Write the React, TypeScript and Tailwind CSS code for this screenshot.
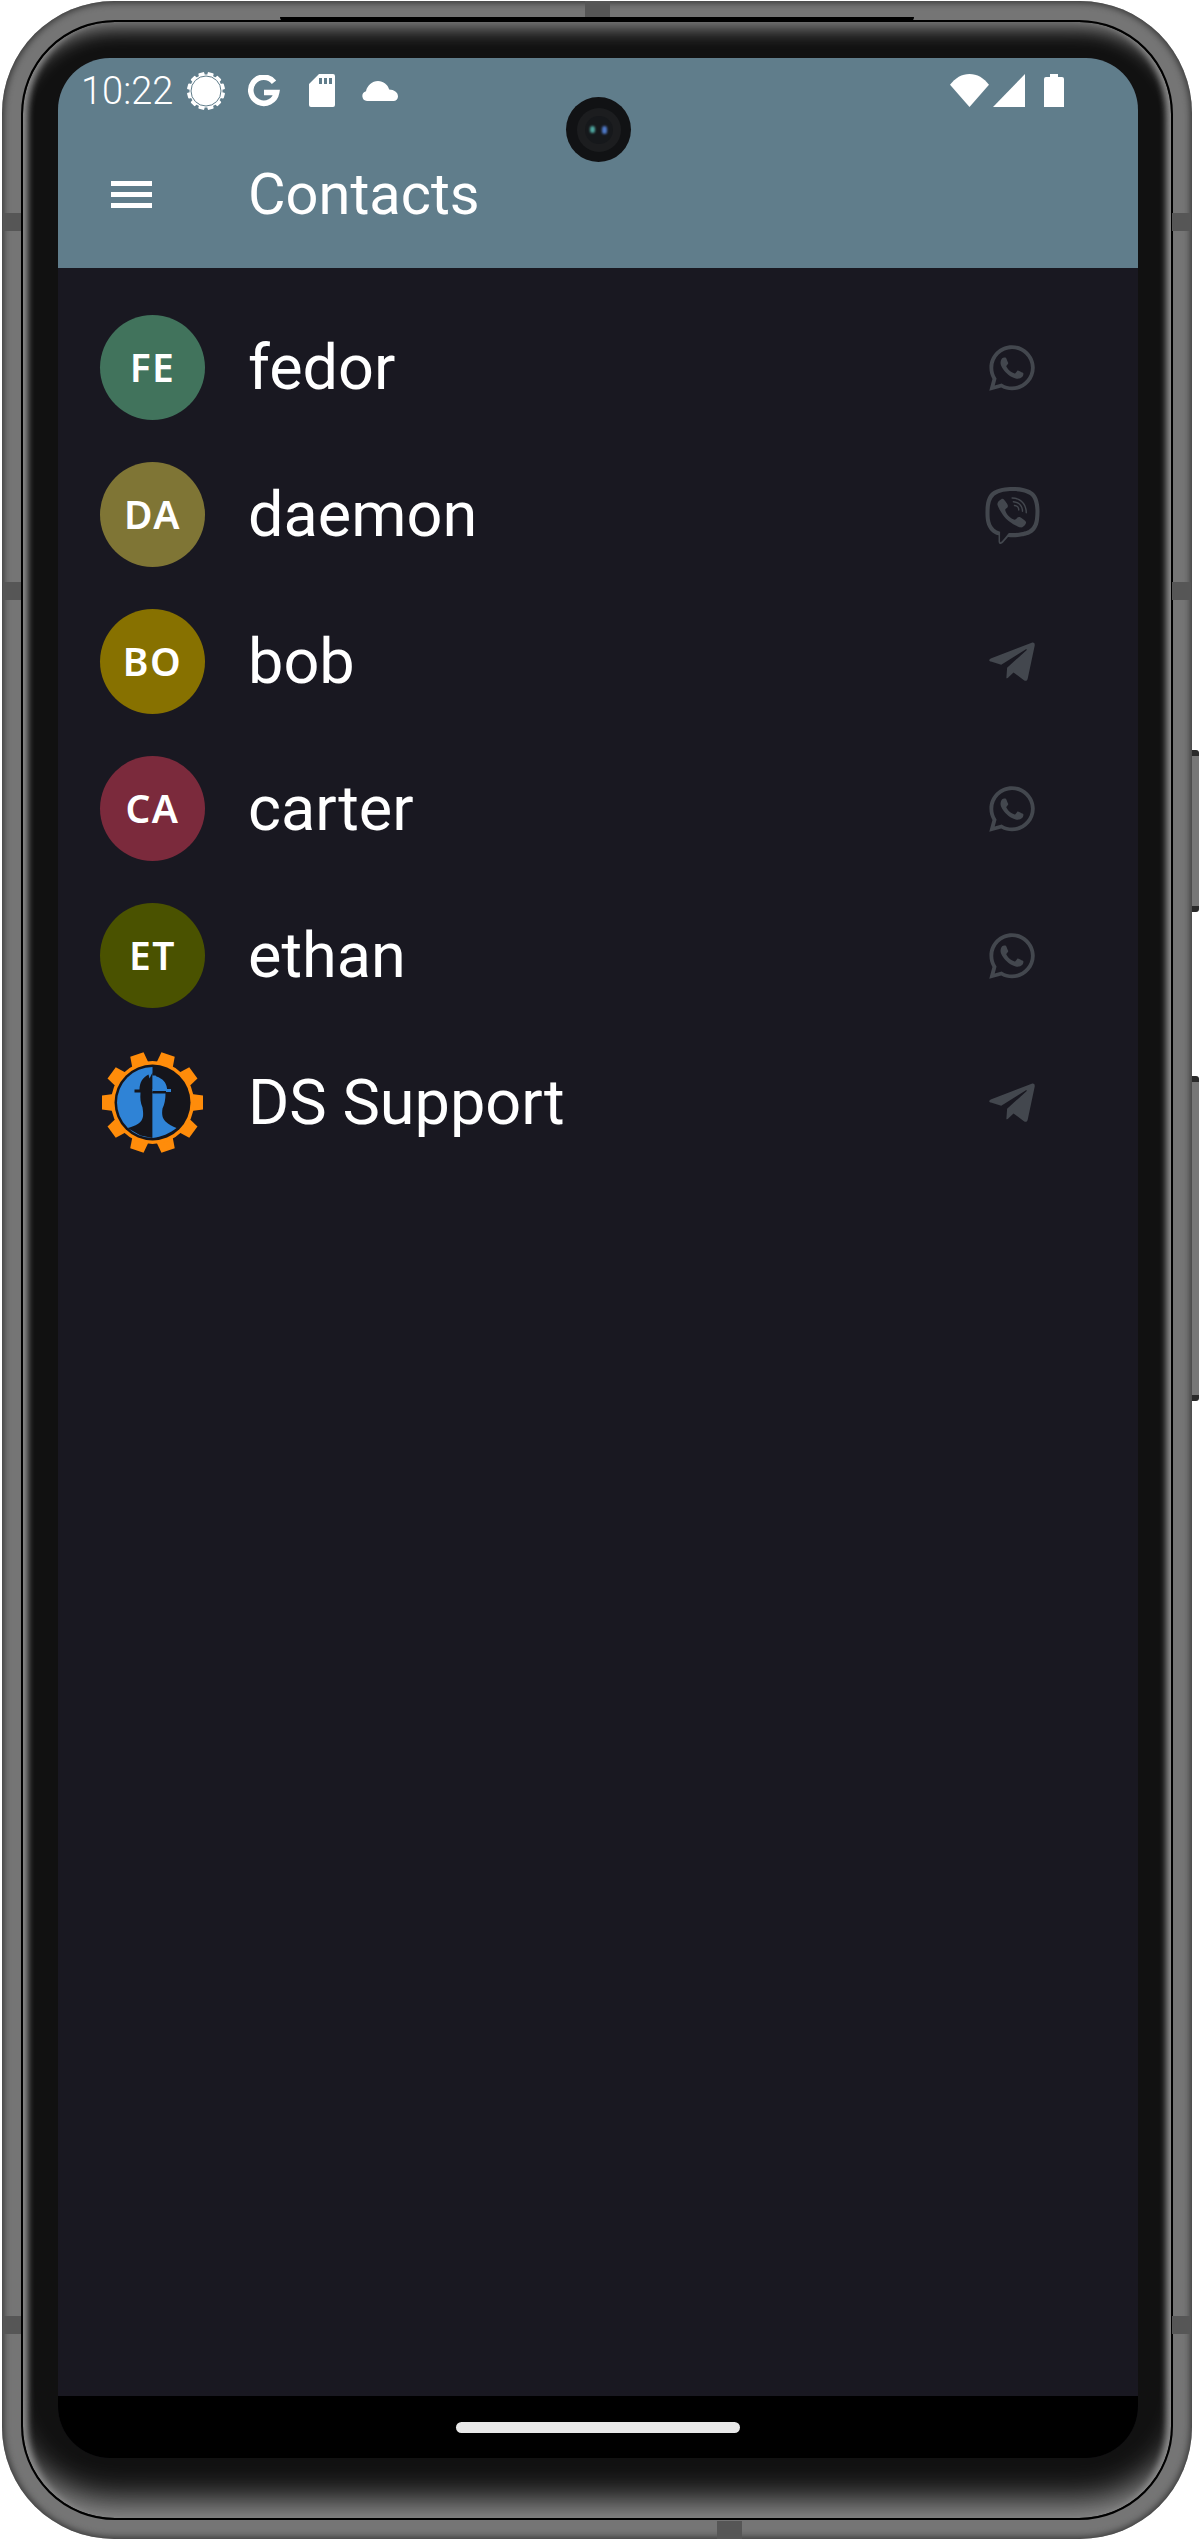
import React from "react";
import { FaWhatsapp, FaViber, FaTelegramPlane } from "react-icons/fa";

function SunGear() {
  const teeth = Array.from({ length: 12 }, (_, i) => i * 30 + 15);
  return (
    <svg width="38" height="38" viewBox="-19 -19 38 38" className="ml-[16px] shrink-0">
      {teeth.map((a) => (
        <rect key={a} x="-3" y="-19" width="6" height="6" rx="1" fill="#fff" transform={`rotate(${a})`} />
      ))}
      <circle r="16.5" fill="#fff" />
      <circle r="15" fill="none" stroke="#607d8b" strokeWidth="1" />
    </svg>
  );
}

function GoogleG() {
  return (
    <svg width="33" height="32" viewBox="0 0 33 32" className="ml-[22px] shrink-0">
      <path d="M27 7.2A13 13 0 1 0 29.6 17.5H17" fill="none" stroke="#fff" strokeWidth="5.6" />
    </svg>
  );
}

function SdCard() {
  return (
    <svg width="26" height="33" viewBox="0 0 26 33" className="ml-[29px] shrink-0">
      <path
        fillRule="evenodd"
        fill="#fff"
        d="M10 0H24A2 2 0 0 1 26 2V31A2 2 0 0 1 24 33H2A2 2 0 0 1 0 31V10ZM10 4V10H13V4ZM15 4V10H18V4ZM20 4V10H23V4Z"
      />
    </svg>
  );
}

function Cloud() {
  return (
    <svg width="36" height="20" viewBox="0 0 36 20" className="ml-[27px] shrink-0">
      <path
        fill="#fff"
        d="M5 20A5 5 0 0 1 4 10.2C5.2 4.4 10.2 0 16 0C21.4 0 25.8 3.6 27.2 8.4C32 8.6 36 11 36 15.5C36 18 34 20 31.5 20Z"
      />
    </svg>
  );
}

function Wifi() {
  return (
    <svg width="39" height="33" viewBox="0 0 39 33" className="shrink-0">
      <path fill="#fff" d="M19.5 33L0 10.8C5 4 12 0 19.5 0C27 0 34 4 39 10.8Z" />
    </svg>
  );
}

function Signal() {
  return (
    <svg width="32" height="33" viewBox="0 0 32 33" className="ml-[4px] shrink-0">
      <path fill="#fff" d="M32 0V33H0Z" />
    </svg>
  );
}

function Battery() {
  return (
    <svg width="20" height="33" viewBox="0 0 20 33" className="ml-[19px] shrink-0">
      <path fill="#fff" d="M6 0H14V3H18A2 2 0 0 1 20 5V33H0V5A2 2 0 0 1 2 3H6Z" />
    </svg>
  );
}

function DsLogo() {
  const teeth = Array.from({ length: 10 }, (_, i) => i * 36 + 90);
  return (
    <svg width="105" height="105" viewBox="-52.5 -52.5 105 105" className="shrink-0">
      {teeth.map((a) => (
        <path key={a} d="M-8.500 -39L-7 -50.500H7L8.500 -39Z" fill="#ff8c0a" transform={`rotate(${a})`} />
      ))}
      <circle r="41.500" fill="#ff8c0a" />
      <circle r="38" fill="#15151b" />
      <path d="M0 -35.500A35.500 35.500 0 0 0 0 35.500Z" fill="#2f83d6" />
      <path
        fill="#15151b"
        d="M0 -30L-3 -24L-4 -28C-10 -25 -13 -20 -13 -13H-18V-10H-12C-12.500 -4 -12 0 -10 5C-9 11 -9 15 -11 18C-14 22 -19 24 -25 25.500L-12 33L0 35.500Z"
      />
      <path
        fill="#2f83d6"
        d="M0 -12V-27H3L4 -26C10 -24 14 -20 14.500 -14V-12ZM0 -9H13C13 -3 12 2 10 6C9 12 10 16 13 19C16 22 20 24 24 25.500C17 31 9 34.500 0 35.500Z"
      />
      <path d="M0 -13.500H18.500V-10.500H0Z" fill="#2f83d6" />
      <path d="M0 -11.500H13.500V-9.500H0Z" fill="#15151b" />
    </svg>
  );
}

const contacts = [
  { name: "fedor", initials: "FE", bg: "bg-[#41735c]", app: "whatsapp" },
  { name: "daemon", initials: "DA", bg: "bg-[#7f7535]", app: "viber" },
  { name: "bob", initials: "BO", bg: "bg-[#877100]", app: "telegram" },
  { name: "carter", initials: "CA", bg: "bg-[#7b2a3c]", app: "whatsapp" },
  { name: "ethan", initials: "ET", bg: "bg-[#4a5200]", app: "whatsapp" },
  { name: "DS Support", initials: "", bg: "", app: "telegram" },
];

function AppIcon({ app }: { app: string }) {
  if (app === "whatsapp") return <FaWhatsapp size={52} color="#43474e" className="shrink-0" />;
  if (app === "viber") return <FaViber size={57} color="#43474e" className="shrink-0" />;
  return <FaTelegramPlane size={52} color="#43474e" className="shrink-0" />;
}

function Band({ className }: { className: string }) {
  return <div className={`absolute bg-[#565656] ${className}`} />;
}

export default function App() {
  return (
    <div className="relative w-[1200px] h-[2541px] bg-white pl-[2px] pt-[1px] font-['Roboto',sans-serif]">
      <div className="absolute left-[1192px] top-[750px] w-[7px] h-[162px] rounded-r-[3px] bg-[#777] border-y-[6px] border-y-[#2a2a2a]" />
      <div className="absolute left-[1192px] top-[1076px] w-[7px] h-[325px] rounded-r-[3px] bg-[#777] border-y-[6px] border-y-[#2a2a2a]" />
      <div className="w-[1190px] h-[2538px] rounded-[112px] bg-[#757575] p-[19px] shadow-[inset_0_0_6px_2px_#3a3a3a]">
        <div className="w-full h-full rounded-[94px] border-2 border-black bg-[#111111] pl-[35px] pt-[36px] shadow-[inset_0_22px_20px_-16px_#8e8e8e,inset_0_-42px_32px_-24px_#8e8e8e,inset_11px_0_6px_-6px_#8c8c8c,inset_-11px_0_6px_-6px_#8c8c8c]">
          <div className="w-[1080px] h-[2400px] rounded-[52px] overflow-hidden flex flex-col bg-[#191821]">
            <div className="bg-[#607d8b] shrink-0">
              <div className="h-[63px] flex items-center pl-[23px] pr-[74px] pt-[2px] text-white">
                <span className="text-[38px] leading-none font-light w-[90px] shrink-0">10:22</span>
                <SunGear />
                <GoogleG />
                <SdCard />
                <Cloud />
                <div className="flex-1" />
                <Wifi />
                <Signal />
                <Battery />
              </div>
              <div className="h-[147px] flex items-center pl-[53px]">
                <div className="w-[41px] flex flex-col gap-[6px] shrink-0">
                  <div className="h-[5px] bg-white" />
                  <div className="h-[5px] bg-white" />
                  <div className="h-[5px] bg-white" />
                </div>
                <span className="ml-[96px] text-[57.75px] leading-none text-white font-normal">Contacts</span>
              </div>
            </div>
            <div className="flex-1 pt-[26px]">
              {contacts.map((c) => (
                <div key={c.name} className="h-[147px] flex items-center pl-[42px] pr-[101px]">
                  {c.initials ? (
                    <div className={`w-[105px] h-[105px] rounded-full shrink-0 flex items-center justify-center pb-[2px] text-white font-['Noto_Sans',sans-serif] font-semibold text-[39px] leading-none tracking-[1.5px] ${c.bg}`}>
                      {c.initials}
                    </div>
                  ) : (
                    <DsLogo />
                  )}
                  <span className="ml-[43px] flex-1 text-[63px] leading-none text-white">{c.name}</span>
                  <div className="w-[50px] h-[60px] flex items-center justify-center shrink-0 pt-[1px]">
                    <AppIcon app={c.app} />
                  </div>
                </div>
              ))}
            </div>
            <div className="h-[62px] bg-black shrink-0 flex items-center justify-center">
              <div className="w-[284px] h-[11px] rounded-full bg-[#e8e8e8]" />
            </div>
          </div>
        </div>
      </div>

      <Band className="left-[3px] top-[213px] w-[18px] h-[18px]" />
      <Band className="left-[3px] top-[582px] w-[18px] h-[18px]" />
      <Band className="left-[3px] top-[2316px] w-[18px] h-[18px]" />
      <Band className="left-[1172px] top-[213px] w-[19px] h-[18px]" />
      <Band className="left-[1172px] top-[582px] w-[19px] h-[18px]" />
      <Band className="left-[1172px] top-[2316px] w-[19px] h-[18px]" />
      <Band className="left-[585px] top-[1px] w-[25px] h-[16px]" />
      <Band className="left-[717px] top-[2521px] w-[25px] h-[18px]" />
      <div className="absolute left-[280px] top-[17px] w-[634px] h-[4px] rounded-b-[4px] bg-black" />

      <div className="absolute left-[566px] top-[97px] w-[65px] h-[65px] rounded-full bg-[#111214] flex items-center justify-center">
        <div className="w-[44px] h-[44px] rounded-full bg-[#1c1d1f] flex items-center justify-center">
          <div className="w-[28px] h-[28px] rounded-full bg-[#16181b] flex items-center justify-center gap-[7px]">
            <div className="w-[5px] h-[7px] rounded-full bg-[#4fa7a0] blur-[1px]" />
            <div className="w-[5px] h-[8px] rounded-full bg-[#4f79c8] blur-[1px]" />
          </div>
        </div>
      </div>
    </div>
  );
}
